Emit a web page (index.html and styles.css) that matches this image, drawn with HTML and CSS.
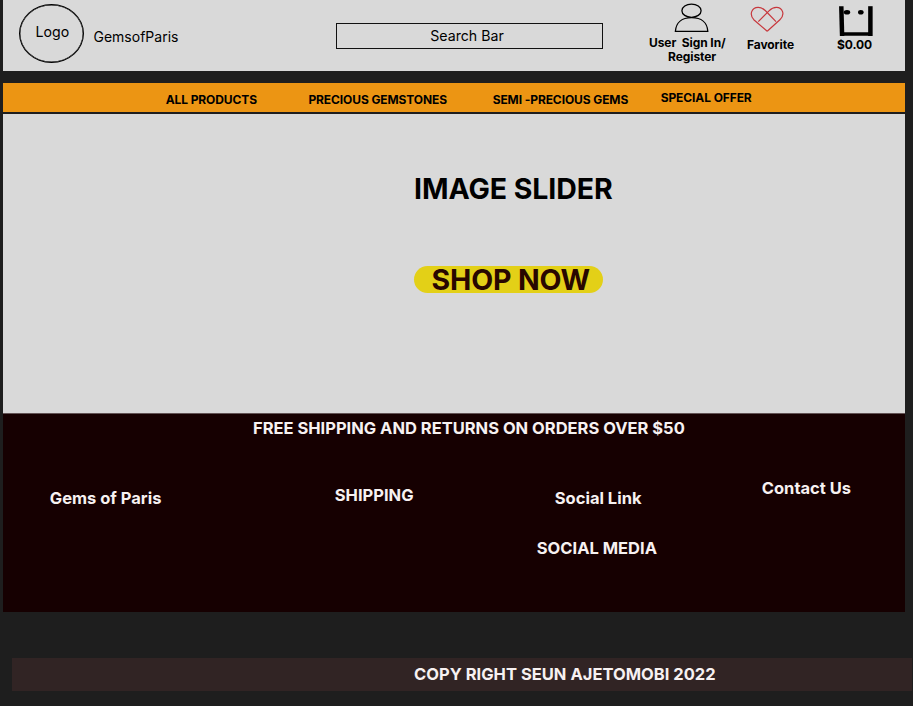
FILE: index.html
```html
<!DOCTYPE html>
<html lang="en">
<head>
<meta charset="utf-8">
<title>GemsofParis</title>
<link rel="stylesheet" href="styles.css">
</head>
<body>
<header class="header">
  <div class="logo"><span>Logo</span></div>
  <div class="brand">GemsofParis</div>
  <div class="search"><span>Search Bar</span></div>
  <a class="action user">
    <svg width="36" height="32" viewBox="0 0 36 32"><ellipse cx="17.5" cy="10.7" rx="9.6" ry="6.6"/><path d="M1.4 31.3C2 22.5 8 17.6 17.6 17.6S33.3 22.5 33.8 31.3Z"/></svg>
    <span class="line">User&nbsp; Sign In/</span>
    <span class="line second">Register</span>
  </a>
  <a class="action favorite">
    <svg width="34" height="28" viewBox="0 0 34 28"><path d="M17.2 26.3L3.8 14.7C-1 9.5 1.6 2.5 8.1 2.3C11.7 2.2 13.5 4 15.5 5.8L26 16.6M17.2 26.3L29.9 14.7C35.5 9.5 32.5 2.5 26.5 2.3C23 2.2 21 3.8 19 5.8L8.3 16.6"/></svg>
    <span class="line">Favorite</span>
  </a>
  <a class="action cart">
    <svg width="36" height="32" viewBox="0 0 36 32"><path class="side" d="M3.3 1.2L4.1 31"/><path class="side" d="M32.4 1.2V31"/><path class="base" d="M3 29H34"/><ellipse cx="9" cy="7.2" rx="3.2" ry="2.3"/><ellipse cx="22.8" cy="7.2" rx="2.8" ry="2.3"/></svg>
    <span class="line">$0.00</span>
  </a>
</header>
<nav class="nav">
  <a>ALL PRODUCTS</a>
  <a class="gemstones">PRECIOUS GEMSTONES</a>
  <a class="semi">SEMI -PRECIOUS GEMS</a>
  <a class="offer">SPECIAL OFFER</a>
</nav>
<main class="hero">
  <h1>IMAGE SLIDER</h1>
  <a class="shop"><span>SHOP NOW</span></a>
</main>
<footer class="footer">
  <p class="promo">FREE SHIPPING AND RETURNS ON ORDERS OVER $50</p>
  <div class="columns">
    <span class="about">Gems of Paris</span>
    <span class="shipping">SHIPPING</span>
    <div class="social"><span class="link">Social Link</span><span class="media">SOCIAL MEDIA</span></div>
    <span class="contact">Contact Us</span>
  </div>
</footer>
<div class="copyright"><span>COPY RIGHT SEUN AJETOMOBI 2022</span></div>
</body>
</html>
```
FILE: styles.css
```css
* { box-sizing: border-box; }
body {
  margin: 0;
  height: 706px;
  overflow: hidden;
  background: #1e1e1e;
  font-family: Inter, "Liberation Sans", sans-serif;
  color: #000;
}
span, a, h1, p { white-space: nowrap; }
svg { display: block; fill: none; stroke: #000; stroke-width: 1.3; }

.header {
  display: grid;
  grid-template-columns: 74.5px 242.5px 313px 98px 90px 1fr;
  align-items: start;
  width: 902px;
  height: 71px;
  margin-left: 3px;
  padding-left: 16px;
  background: #d9d9d9;
  font-size: 14.2px;
  line-height: 18px;
}
.logo {
  width: 65px;
  height: 59px;
  margin-top: 4px;
  padding: 18px 0 0 15.5px;
  border: 1px solid #000;
  border-radius: 50%;
  box-shadow: inset 0 0 0 0.4px #000;
}
.brand { margin-top: 28px; font-size: 14px; }
.search {
  width: 267px;
  height: 26px;
  margin-top: 23px;
  padding: 3px 5px 0 0;
  border: 1px solid #111;
  text-align: center;
}
.action {
  font-size: 12px;
  font-weight: 700;
  letter-spacing: -0.08px;
  line-height: 14px;
}
.action .line { display: block; }
.user svg { margin-left: 25px; }
.user .line { margin-top: 4px; }
.user .second { margin: 0 0 0 19px; }
.favorite svg { margin: 5px 0 0 3px; stroke: #c7383d; stroke-width: 1.2; }
.favorite .line { margin-top: 5px; }
.cart svg { margin: 5px 0 0 1px; }
.cart .line { margin-top: 1px; }
.cart .side { stroke-width: 4.5; }
.cart .base { stroke-width: 3.5; }
.cart ellipse { fill: #000; stroke: none; }

.nav {
  display: grid;
  grid-template-columns: 142.7px 184.3px 168px 1fr;
  width: 902px;
  height: 29px;
  margin: 12px 0 0 3px;
  padding: 10px 0 0 162.7px;
  background: #ec9513;
  font-size: 12px;
  font-weight: 700;
  letter-spacing: -0.1px;
  line-height: 14px;
}
.offer { margin-top: -2px; }

.hero {
  width: 902px;
  height: 299px;
  margin: 2px 0 0 3px;
  padding: 58px 0 0 411px;
  background: #d9d9d9;
}
.hero h1 {
  margin: 0;
  font-size: 28.5px;
  letter-spacing: -0.07px;
  line-height: 34px;
  font-weight: 700;
}
.shop {
  display: flex;
  align-items: center;
  width: 189px;
  height: 27px;
  margin-top: 60px;
  padding-left: 17.5px;
  border-radius: 14px;
  background: #e3d017;
  color: #280700;
  font-size: 28.5px;
  letter-spacing: -0.15px;
  line-height: 34px;
  font-weight: 700;
}

.footer {
  width: 902px;
  height: 199px;
  margin-left: 3px;
  background: #160001;
  box-shadow: inset 0 1px #625355;
  color: #f7f1f1;
  font-size: 16.5px;
  font-weight: 700;
  line-height: 20px;
}
.promo { margin: 0; padding: 5px 0 0 250px; }
.columns {
  display: grid;
  grid-template-columns: 285px 202px 225px 1fr;
  align-items: start;
  margin-top: 40px;
  padding-left: 46.8px;
}
.about { margin-top: 10px; }
.shipping { margin-top: 7px; }
.social { display: flex; flex-direction: column; gap: 30px; margin-top: 10px; }
.link { margin-left: 18px; }

.copyright {
  width: 900px;
  height: 33px;
  margin: 46px 0 0 12px;
  padding: 6px 0 0 402px;
  background: #312424;
  color: #f7f1f1;
  font-size: 16.5px;
  font-weight: 700;
  letter-spacing: 0.02px;
  line-height: 20px;
}
```
